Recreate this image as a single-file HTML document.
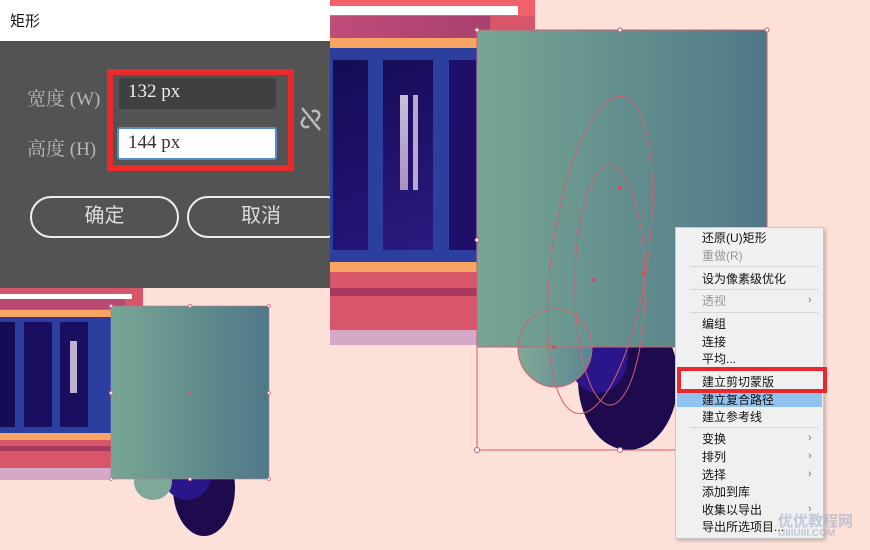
<!DOCTYPE html>
<html><head><meta charset="utf-8"><style>
*{margin:0;padding:0;box-sizing:border-box}
body{width:870px;height:550px;overflow:hidden;background:#fde0d7;position:relative;font-family:"Liberation Sans","Noto Sans CJK SC",sans-serif}
.a{position:absolute}
.mi{position:absolute;left:702px;font-size:12px;color:#111;line-height:14px}
.sep{position:absolute;left:690px;width:128px;height:1px;background:#d5d5d5}
.arr{position:absolute;left:808px;font-size:11px;color:#777}
</style></head><body>
<!-- top right scene -->
<div class="a" style="left:330px;top:0;width:205px;height:345px;background:#d8566a"></div>
<div class="a" style="left:330px;top:0;width:205px;height:16px;background:#f2606c"></div>
<div class="a" style="left:330px;top:6px;width:188px;height:9px;background:#fff"></div>
<div class="a" style="left:330px;top:16px;width:160px;height:22px;background:linear-gradient(90deg,#c04c78,#a8406e)"></div>
<div class="a" style="left:330px;top:38px;width:150px;height:10px;background:#f8a462"></div>
<div class="a" style="left:330px;top:48px;width:150px;height:214px;background:#2d3f9e"></div>
<div class="a" style="left:333px;top:60px;width:35px;height:190px;background:linear-gradient(160deg,#140c55,#241477)"></div>
<div class="a" style="left:383px;top:60px;width:50px;height:190px;background:linear-gradient(160deg,#160c58,#2c1a80)"></div>
<div class="a" style="left:449px;top:60px;width:27px;height:190px;background:#1e1068"></div>
<div class="a" style="left:400px;top:95px;width:8px;height:95px;background:linear-gradient(#c8c0d8,#a890c0)"></div>
<div class="a" style="left:413px;top:95px;width:5px;height:95px;background:#b8a8d0"></div>
<div class="a" style="left:330px;top:262px;width:150px;height:10px;background:#f8a462"></div>
<div class="a" style="left:330px;top:288px;width:150px;height:8px;background:#a8385e"></div>
<div class="a" style="left:330px;top:330px;width:150px;height:15px;background:#d6a8c8"></div>
<!-- big teal + shapes -->
<svg class="a" style="left:470px;top:25px" width="310" height="440">
<defs><linearGradient id="g" x1="0" x2="1"><stop offset="0" stop-color="#78a694"/><stop offset="1" stop-color="#4f7888"/></linearGradient>
<linearGradient id="g2" x1="0" x2="1"><stop offset="0" stop-color="#82aa98"/><stop offset="1" stop-color="#5a8590"/></linearGradient></defs>
<ellipse cx="158" cy="355" rx="50" ry="70" fill="#1e0b4e"/>
<ellipse cx="128" cy="330" rx="30" ry="38" fill="#2a168a"/>
<ellipse cx="85" cy="323" rx="37" ry="39" fill="url(#g2)"/>
<rect x="7" y="5" width="290" height="317" fill="url(#g)"/>
<g fill="none" stroke="#d06070" stroke-width="1">
<rect x="7" y="5" width="290" height="420"/>
<ellipse cx="130" cy="230" rx="48" ry="160" transform="rotate(8 130 230)"/>
<ellipse cx="140" cy="260" rx="35" ry="120"/>
<ellipse cx="85" cy="323" rx="37" ry="39"/>
<line x1="7" y1="322" x2="297" y2="322"/>
</g>
<g fill="#e04858"><circle cx="150" cy="163" r="2"/><circle cx="124" cy="255" r="2"/><circle cx="174" cy="248" r="2"/><circle cx="84" cy="322" r="2"/></g>
<g fill="#fff" stroke="#c06070"><circle cx="7" cy="5" r="2"/><circle cx="150" cy="5" r="2"/><circle cx="297" cy="5" r="2"/><circle cx="7" cy="215" r="2"/><circle cx="7" cy="425" r="2.5"/><circle cx="150" cy="425" r="2.5"/></g>
</svg>
<!-- bottom left scene -->
<div class="a" style="left:0;top:288px;width:143px;height:112px;background:#d8566a"></div>
<div class="a" style="left:0;top:400px;width:112px;height:70px;background:#d8566a"></div>
<div class="a" style="left:0;top:294px;width:132px;height:5px;background:#fff"></div>
<div class="a" style="left:0;top:299px;width:125px;height:10px;background:#b84872"></div>
<div class="a" style="left:0;top:310px;width:112px;height:7px;background:#f8a462"></div>
<div class="a" style="left:0;top:317px;width:112px;height:116px;background:#2d3f9e"></div>
<div class="a" style="left:0;top:322px;width:15px;height:105px;background:#140c55"></div>
<div class="a" style="left:24px;top:322px;width:28px;height:105px;background:#1a0e60"></div>
<div class="a" style="left:60px;top:322px;width:28px;height:105px;background:#1a0e60"></div>
<div class="a" style="left:70px;top:341px;width:7px;height:52px;background:#c0b0d0"></div>
<div class="a" style="left:0;top:433px;width:112px;height:7px;background:#f8a462"></div>
<div class="a" style="left:0;top:446px;width:112px;height:5px;background:#a8385e"></div>
<div class="a" style="left:0;top:468px;width:112px;height:12px;background:#d6a8c8"></div>
<svg class="a" style="left:105px;top:300px" width="170" height="245">
<defs><linearGradient id="h" x1="0" x2="1"><stop offset="0" stop-color="#78a694"/><stop offset="1" stop-color="#4f7888"/></linearGradient></defs>
<ellipse cx="99" cy="188" rx="31" ry="48" fill="#1e0b4e"/>
<ellipse cx="82" cy="172" rx="25" ry="28" fill="#2a168a"/>
<ellipse cx="48" cy="182" rx="19" ry="18" fill="#80a898"/>
<rect x="6" y="6" width="158" height="173" fill="url(#h)" stroke="#b08090" stroke-width="0.6"/>
<g fill="#fff" stroke="#d08090"><circle cx="6" cy="6" r="1.5"/><circle cx="85" cy="6" r="1.5"/><circle cx="164" cy="6" r="1.5"/><circle cx="6" cy="93" r="1.5"/><circle cx="164" cy="93" r="1.5"/><circle cx="6" cy="179" r="1.5"/><circle cx="85" cy="179" r="1.5"/><circle cx="164" cy="179" r="1.5"/></g>
<circle cx="85" cy="93" r="1.5" fill="#e06070"/>
</svg>
<!-- dialog -->
<div class="a" style="left:0;top:0;width:330px;height:288px;overflow:hidden">
<div class="a" style="left:0;top:0;width:330px;height:41px;background:#fff"></div>
<div class="a" style="left:10px;top:10px;font-size:15px;color:#111">矩形</div>
<div class="a" style="left:0;top:41px;width:330px;height:247px;background:#535353"></div>
<div class="a" style="left:27px;top:84px;font-size:19px;color:#b8b8b8;font-family:'Liberation Serif','Noto Serif CJK SC',serif">宽度 (W)</div>
<div class="a" style="left:27px;top:134px;font-size:19px;color:#b8b8b8;font-family:'Liberation Serif','Noto Serif CJK SC',serif">高度 (H)</div>
<div class="a" style="left:107px;top:69px;width:187px;height:102px;border:6px solid #ea2a2a"></div>
<div class="a" style="left:119px;top:78px;width:157px;height:31px;background:#404040;border-radius:3px"></div>
<div class="a" style="left:128px;top:81px;font-size:19px;color:#eee;font-family:'Liberation Serif',serif">132 px</div>
<div class="a" style="left:117px;top:127px;width:160px;height:33px;background:#fff;border:2px solid #5a8cc8;border-radius:3px"></div>
<div class="a" style="left:128px;top:132px;font-size:19px;color:#333;font-family:'Liberation Serif',serif">144 px</div>
<svg class="a" style="left:298px;top:104px" width="26" height="30"><g fill="none" stroke="#bbb" stroke-width="2.5"><path d="M4 4 L22 26"/><path d="M14 8 a4 4 0 0 1 6 6 l-2 3"/><path d="M11 22 a4 4 0 0 1 -6 -6 l2 -3"/></g></svg>
<div class="a" style="left:30px;top:196px;width:149px;height:42px;border:2.5px solid #eee;border-radius:21px;color:#ddd;font-size:20px;text-align:center;line-height:37px">确定</div>
<div class="a" style="left:187px;top:196px;width:160px;height:42px;border:2.5px solid #eee;border-radius:21px;color:#ddd;font-size:20px;line-height:37px;padding-left:52px">取消</div>
</div>
<!-- context menu -->
<div class="a" style="left:675px;top:227px;width:149px;height:312px;background:#f0f0f0;border:1px solid #c8c8c8;box-shadow:2px 2px 3px rgba(0,0,0,.2)"></div>
<div class="a" style="left:677px;top:392px;width:145px;height:15px;background:#90c4ee"></div>
<div class="a" style="left:677px;top:367px;width:150px;height:26px;border:4px solid #e8282e"></div>
<div class="mi" style="top:231px">还原(U)矩形</div>
<div class="mi" style="top:249px;color:#999">重做(R)</div>
<div class="sep" style="top:266px"></div>
<div class="mi" style="top:272px">设为像素级优化</div>
<div class="sep" style="top:289px"></div>
<div class="mi" style="top:294px;color:#999">透视</div><div class="arr" style="top:294px">›</div>
<div class="sep" style="top:312px"></div>
<div class="mi" style="top:317px">编组</div>
<div class="mi" style="top:335px">连接</div>
<div class="mi" style="top:352px">平均...</div>
<div class="mi" style="top:375px">建立剪切蒙版</div>
<div class="mi" style="top:393px">建立复合路径</div>
<div class="mi" style="top:410px">建立参考线</div>
<div class="sep" style="top:427px"></div>
<div class="mi" style="top:432px">变换</div><div class="arr" style="top:432px">›</div>
<div class="mi" style="top:450px">排列</div><div class="arr" style="top:450px">›</div>
<div class="mi" style="top:468px">选择</div><div class="arr" style="top:468px">›</div>
<div class="mi" style="top:485px">添加到库</div>
<div class="mi" style="top:503px">收集以导出</div><div class="arr" style="top:503px">›</div>
<div class="mi" style="top:520px">导出所选项目...</div>
<div class="a" style="left:778px;top:510px;font-size:15px;font-weight:bold;color:rgba(150,170,200,.55)">优优教程网</div>
<div class="a" style="left:778px;top:528px;font-size:10px;font-weight:bold;color:rgba(150,170,200,.55)">UIIIUIII.COM</div>
</body></html>
